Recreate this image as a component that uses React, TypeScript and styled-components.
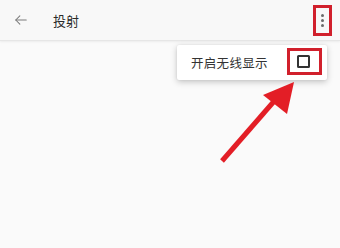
import React from "react";
import styled, { createGlobalStyle } from "styled-components";

const Global = createGlobalStyle`
  html, body { margin: 0; padding: 0; background: #fafafa; }
  body { font-family: "Noto Sans CJK SC", "Noto Sans", sans-serif; }
`;

const Screen = styled.div`
  position: relative;
  width: 340px;
  height: 248px;
  overflow: hidden;
  background: #fafafa;
`;

const Toolbar = styled.header`
  display: flex;
  align-items: center;
  height: 40px;
  padding: 0 8px 0 13px;
  background: #f8f8f8;
  border-bottom: 1px solid #e6e6e6;
  box-shadow: 0 1px 2px rgba(0, 0, 0, 0.06);
`;

const IconButton = styled.div`
  display: flex;
  align-items: center;
  justify-content: center;
  width: 15px;
  height: 15px;
`;

const Title = styled.h1`
  margin: 0 0 0 25px;
  font-size: 13px;
  font-weight: 400;
  color: #2a2a2a;
  flex: 1;
`;

const MenuButton = styled.div`
  position: relative;
  display: flex;
  flex-direction: column;
  align-items: center;
  justify-content: center;
  gap: 2px;
  width: 19px;
  height: 30px;
`;

const Dot = styled.span`
  width: 3px;
  height: 3px;
  border-radius: 50%;
  background: #6a6a6a;
`;

const Highlight = styled.div<{ $w: number; $h: number }>`
  position: absolute;
  left: 0;
  top: 0;
  width: ${(p) => p.$w}px;
  height: ${(p) => p.$h}px;
  box-sizing: border-box;
  border: 3px solid #d1202c;
`;

const Menu = styled.div`
  position: absolute;
  left: 177px;
  top: 45px;
  width: 150px;
  height: 35px;
  background: #ffffff;
  border-radius: 2px;
  box-shadow: 0 2px 6px rgba(0, 0, 0, 0.22), 0 0 2px rgba(0, 0, 0, 0.08);
  display: flex;
  align-items: center;
  padding-left: 14px;
  box-sizing: border-box;
`;

const MenuLabel = styled.span`
  flex: 1;
  font-size: 12.5px;
  color: #333333;
  letter-spacing: 0.3px;
`;

const CheckArea = styled.div`
  position: relative;
  display: flex;
  align-items: center;
  justify-content: center;
  width: 35px;
  height: 27px;
  margin-right: 5px;
  margin-top: -2px;
`;

const Checkbox = styled.span`
  width: 13px;
  height: 13px;
  box-sizing: border-box;
  border: 2px solid #333333;
  border-radius: 1.5px;
  margin-left: -2px;
`;

const ArrowSvg = styled.svg`
  position: absolute;
  left: 0;
  top: 0;
  pointer-events: none;
`;

export default function App() {
  return (
    <Screen>
      <Global />
      <Toolbar>
        <IconButton>
          <svg width="14" height="14" viewBox="0 0 24 24" fill="none" stroke="#7a7a7a" strokeWidth="1.8" strokeLinecap="round" strokeLinejoin="round">
            <path d="M21 12H3" />
            <path d="M10 5l-7 7 7 7" />
          </svg>
        </IconButton>
        <Title>投射</Title>
        <MenuButton>
          <Dot />
          <Dot />
          <Dot />
          <Highlight $w={19} $h={31} />
        </MenuButton>
      </Toolbar>
      <Menu>
        <MenuLabel>开启无线显示</MenuLabel>
        <CheckArea>
          <Checkbox />
          <Highlight $w={35} $h={27} />
        </CheckArea>
      </Menu>
      <ArrowSvg width="340" height="248" viewBox="0 0 340 248">
        <line x1="222" y1="161" x2="276" y2="99" stroke="#e31e26" strokeWidth="5" strokeLinecap="butt" />
        <polygon points="294,82 263,95 287,114" fill="#e31e26" />
      </ArrowSvg>
    </Screen>
  );
}
